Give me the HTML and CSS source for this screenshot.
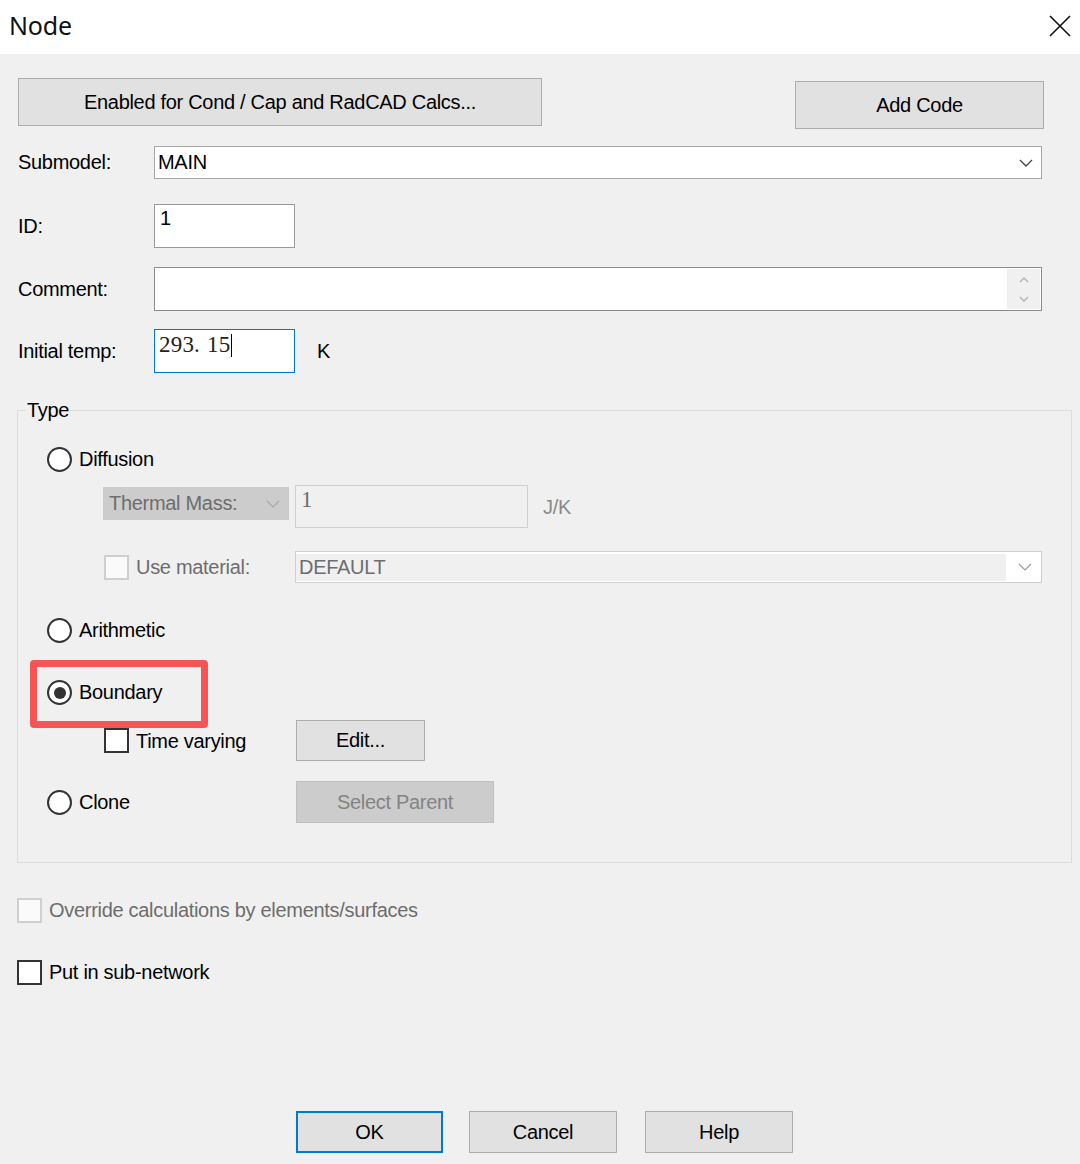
FILE: index.html
```html
<!DOCTYPE html>
<html lang="en">
<head>
<meta charset="utf-8">
<title>Node</title>
<link rel="stylesheet" href="styles.css">
</head>
<body>
<div class="dialog">
  <header class="titlebar">
    <span class="title">Node</span>
    <svg class="close" width="22" height="22" viewBox="0 0 22 22" aria-label="Close">
      <path d="M1 1 L21 21 M21 1 L1 21" stroke="#111" stroke-width="1.6" fill="none"/>
    </svg>
  </header>

  <main class="content">
    <div class="top-row">
      <button class="btn btn-enabled">Enabled for Cond / Cap and RadCAD Calcs...</button>
      <button class="btn btn-addcode">Add Code</button>
    </div>

    <div class="field row-submodel">
      <span class="field-label">Submodel:</span>
      <div class="combo combo-submodel">
        <span class="combo-text">MAIN</span>
        <svg class="chev" width="14" height="8" viewBox="0 0 14 8"><path d="M1 1 L7 7 L13 1" stroke="#444" stroke-width="1.3" fill="none"/></svg>
      </div>
    </div>

    <div class="field row-id">
      <span class="field-label">ID:</span>
      <div class="edit edit-short">1</div>
    </div>

    <div class="field row-comment">
      <span class="field-label">Comment:</span>
      <div class="edit edit-comment">
        <span class="edit-area"></span>
        <span class="spin">
          <svg width="10" height="6" viewBox="0 0 10 6"><path d="M1 5 L5 1 L9 5" stroke="#b0b0b0" stroke-width="1.4" fill="none"/></svg>
          <svg width="10" height="6" viewBox="0 0 10 6"><path d="M1 1 L5 5 L9 1" stroke="#b0b0b0" stroke-width="1.4" fill="none"/></svg>
        </span>
      </div>
    </div>

    <div class="field row-temp">
      <span class="field-label">Initial temp:</span>
      <div class="edit edit-short edit-focus"><span class="serif-value">293. 15</span><span class="caret"></span></div>
      <span class="unit">K</span>
    </div>

    <section class="group">
      <span class="group-title">Type</span>

      <div class="g-row r-diffusion">
        <span class="radio"></span><span class="choice-text">Diffusion</span>
      </div>

      <div class="g-row r-thermal">
        <div class="combo combo-thermal">
          <span class="combo-text">Thermal Mass:</span>
          <svg class="chev" width="14" height="8" viewBox="0 0 14 8"><path d="M1 1 L7 7 L13 1" stroke="#a8a8a8" stroke-width="1.2" fill="none"/></svg>
        </div>
        <div class="edit-disabled"><span class="serif-value">1</span></div>
        <span class="unit-disabled">J/K</span>
      </div>

      <div class="g-row r-material">
        <div class="chk-label">
          <span class="check check-disabled"></span><span class="muted-text">Use material:</span>
        </div>
        <div class="combo combo-material">
          <span class="combo-inner">DEFAULT</span>
          <span class="combo-btn">
            <svg width="14" height="8" viewBox="0 0 14 8"><path d="M1 1 L7 7 L13 1" stroke="#9a9a9a" stroke-width="1.2" fill="none"/></svg>
          </span>
        </div>
      </div>

      <div class="g-row r-arith">
        <span class="radio"></span><span class="choice-text">Arithmetic</span>
      </div>

      <div class="g-row r-boundary">
        <span class="radio checked"></span><span class="choice-text">Boundary</span>
        <span class="highlight"></span>
      </div>

      <div class="g-row r-timevar">
        <div class="chk-label">
          <span class="check"></span><span class="choice-text">Time varying</span>
        </div>
        <button class="btn btn-edit">Edit...</button>
      </div>

      <div class="g-row r-clone">
        <div class="choice-label">
          <span class="radio"></span><span class="choice-text">Clone</span>
        </div>
        <button class="btn btn-disabled btn-parent">Select Parent</button>
      </div>
    </section>

    <div class="solo-row r-override">
      <span class="check check-disabled"></span><span class="muted-text">Override calculations by elements/surfaces</span>
    </div>

    <div class="solo-row r-subnet">
      <span class="check"></span><span class="choice-text">Put in sub-network</span>
    </div>

    <div class="actions">
      <button class="btn btn-action btn-default">OK</button>
      <button class="btn btn-action btn-cancel">Cancel</button>
      <button class="btn btn-action btn-help">Help</button>
    </div>
  </main>
</div>
</body>
</html>
```

FILE: styles.css
```css
* {
  box-sizing: border-box;
}

html,
body {
  margin: 0;
  padding: 0;
}

body {
  width: 1080px;
  height: 1164px;
  overflow: hidden;
  background: #f0f0f0;
  color: #000;
  font-family: "Liberation Sans", Arial, sans-serif;
  font-size: 20px;
  letter-spacing: -0.3px;
}

/* ---------- title bar ---------- */
.titlebar {
  height: 54px;
  background: #fff;
  display: flex;
  align-items: center;
  justify-content: space-between;
  padding: 0 9px 0 9px;
}

.title {
  font-family: "Noto Sans", "Open Sans", sans-serif;
  font-size: 25px;
  letter-spacing: -0.2px;
  color: #111;
  line-height: 1;
  margin-top: -3px;
}

.close {
  display: block;
  margin-top: -3px;
}

/* ---------- body ---------- */
.content {
  padding: 0 36px 0 18px;
}

.btn {
  font: inherit;
  letter-spacing: inherit;
  color: #000;
  background: #e1e1e1;
  border: 1px solid #adadad;
  padding: 0;
  margin: 0;
  display: flex;
  align-items: center;
  justify-content: center;
  flex: none;
}

.top-row {
  display: flex;
  justify-content: space-between;
  align-items: flex-start;
  margin-top: 24px;
}

.btn-enabled {
  width: 524px;
  height: 48px;
}

.btn-addcode {
  width: 249px;
  height: 48px;
  margin-top: 3px;
}

/* label + control rows */
.field {
  display: flex;
  align-items: center;
}

.field-label {
  width: 136px;
  flex: none;
}

.row-submodel {
  margin-top: 17px;
  height: 33px;
}

.row-id {
  margin-top: 25px;
}

.row-comment {
  margin-top: 19px;
}

.row-temp {
  margin-top: 18px;
}

.combo {
  display: flex;
  align-items: center;
  flex: none;
}

.combo-submodel {
  width: 888px;
  height: 33px;
  background: #fff;
  border: 1px solid #a6a6a6;
  padding: 0 8px 0 3px;
}

.combo-text {
  flex: 1;
}

.chev {
  display: block;
  flex: none;
}

.edit {
  height: 44px;
  background: #fff;
  border: 1px solid #9a9a9a;
  padding: 2px 5px;
  flex: none;
}

.edit-short {
  width: 141px;
}

.edit-focus {
  border-color: #0078d7;
  padding: 2px 4px;
  display: flex;
  align-items: flex-start;
}

.serif-value {
  font-family: "Liberation Serif", "Times New Roman", serif;
  font-size: 23px;
  letter-spacing: 0.2px;
  word-spacing: 1px;
  color: #222;
}

.caret {
  display: inline-block;
  width: 1px;
  height: 23px;
  background: #000;
  margin: 2px 0 0 1px;
}

.edit-comment {
  width: 888px;
  display: flex;
  padding: 1px;
  border-color: #8c8c8c;
}

.edit-area {
  flex: 1;
}

.spin {
  width: 33px;
  background: #f0f0f0;
  display: flex;
  flex-direction: column;
  align-items: center;
  justify-content: center;
  gap: 13px;
}

.spin svg {
  display: block;
}

.unit {
  margin-left: 22px;
}

/* ---------- Type group ---------- */
.group {
  position: relative;
  margin: 37px -28px 0 -1px;
  border: 1px solid #dcdcdc;
  padding: 0 0 39px 0;
}

.group-title {
  position: absolute;
  top: -12px;
  left: 8px;
  padding: 0 1px;
  background: #f0f0f0;
}

.g-row {
  display: flex;
  align-items: center;
  padding-left: 29px;
}

.radio {
  width: 25px;
  height: 25px;
  flex: none;
  border-radius: 50%;
  border: 2px solid #333;
  background: #fff;
  display: flex;
  align-items: center;
  justify-content: center;
}

.radio.checked::after {
  content: "";
  width: 12px;
  height: 12px;
  border-radius: 50%;
  background: #333;
}

.choice-text {
  margin-left: 7px;
  white-space: nowrap;
}

.muted-text {
  margin-left: 7px;
  color: #6d6d6d;
  white-space: nowrap;
}

.check {
  width: 25px;
  height: 25px;
  flex: none;
  border: 2px solid #333;
  background: #fff;
}

.check-disabled {
  border: 2px solid #cfcfcf;
  background: #fafafa;
}

.r-diffusion {
  margin-top: 36px;
  height: 25px;
}

.r-thermal {
  margin-top: 13px;
  height: 43px;
  align-items: flex-start;
  padding-left: 85px;
}

.combo-thermal {
  width: 186px;
  height: 33px;
  margin-top: 2px;
  background: #cccccc;
  border: 1px solid #cccccc;
  color: #6d6d6d;
  padding: 0 8px 0 5px;
}

.edit-disabled {
  width: 233px;
  height: 43px;
  margin-left: 6px;
  border: 1px solid #cfcfcf;
  background: #f0f0f0;
  padding: 1px 5px;
  flex: none;
}

.edit-disabled .serif-value {
  color: #6d6d6d;
}

.unit-disabled {
  margin-left: 15px;
  align-self: center;
  color: #8a8a8a;
  padding-top: 2px;
}

.r-material {
  margin-top: 23px;
  height: 32px;
  padding-left: 86px;
}

.chk-label {
  width: 191px;
  flex: none;
  display: flex;
  align-items: center;
}

.combo-material {
  width: 747px;
  height: 32px;
  border: 1px solid #cfcfcf;
  background: #fff;
  align-items: stretch;
}

.combo-inner {
  flex: 1;
  margin: 2px 0 1px 0;
  background: #f0f0f0;
  color: #6d6d6d;
  padding-left: 3px;
  display: flex;
  align-items: center;
}

.combo-btn {
  width: 35px;
  display: flex;
  align-items: center;
  justify-content: center;
}

.combo-btn svg {
  display: block;
  margin-left: 3px;
}

.r-arith {
  margin-top: 35px;
  height: 25px;
}

.r-boundary {
  position: relative;
  margin-top: 37px;
  height: 25px;
}

/* callout frame drawn over the selected option */
.highlight {
  position: absolute;
  left: 12px;
  top: -20px;
  width: 178px;
  height: 68px;
  border: 7px solid #f65555;
  border-radius: 4px;
  pointer-events: none;
}

.r-timevar {
  margin-top: 15px;
  height: 41px;
  padding-left: 86px;
}

.r-timevar .chk-label {
  width: 192px;
}

.r-timevar .choice-text {
  padding-top: 2px;
}

.btn-edit {
  width: 129px;
  height: 41px;
}

.r-clone {
  margin-top: 20px;
  height: 42px;
}

.choice-label {
  width: 249px;
  flex: none;
  display: flex;
  align-items: center;
}

.btn-disabled {
  background: #cccccc;
  border-color: #bfbfbf;
  color: #838383;
}

.btn-parent {
  width: 198px;
  height: 42px;
}

/* ---------- option checkboxes below group ---------- */
.solo-row {
  display: flex;
  align-items: center;
  margin-left: -1px;
  height: 25px;
}

.r-override {
  margin-top: 35px;
}

.r-subnet {
  margin-top: 37px;
}

/* ---------- dialog buttons ---------- */
.actions {
  display: flex;
  margin-top: 126px;
  padding-left: 278px;
}

.btn-action {
  width: 148px;
  height: 42px;
}

.btn-default {
  width: 147px;
  border: 2px solid #0078d7;
}

.btn-cancel {
  margin-left: 26px;
}

.btn-help {
  margin-left: 28px;
}
```
